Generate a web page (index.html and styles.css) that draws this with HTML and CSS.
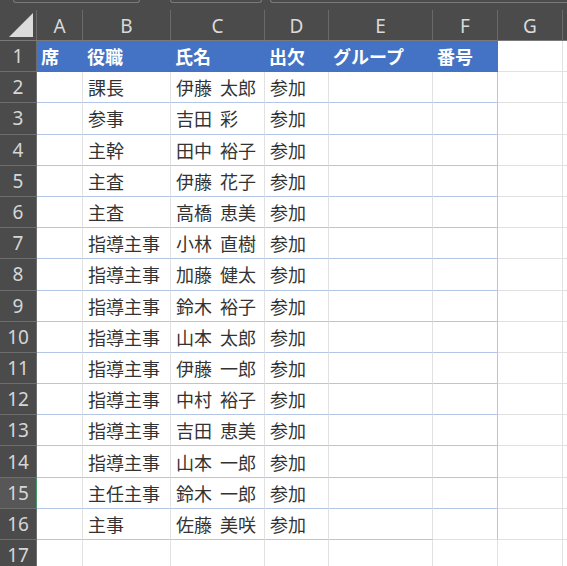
FILE: index.html
```html
<!DOCTYPE html>
<html lang="ja">
<head>
<meta charset="utf-8">
<link rel="stylesheet" href="styles.css">
</head>
<body>
<div class="strip">
  <div class="tab t1"></div>
  <div class="tab t2"></div>
  <div class="tab t3"></div>
</div>
<div class="sheet">
  <div class="hd corner"><div class="tri"></div></div>
  <div class="hd col">A</div><div class="hd col">B</div><div class="hd col">C</div><div class="hd col">D</div><div class="hd col">E</div><div class="hd col">F</div><div class="hd col">G</div><div class="hd col last"></div>

  <div class="rh">1</div>
  <div class="th">席</div><div class="th">役職</div><div class="th">氏名</div><div class="th">出欠</div><div class="th">グループ</div><div class="th">番号</div><div class="c"></div><div class="c"></div>

  <div class="rh">2</div><div class="d"></div><div class="d">課長</div><div class="d">伊藤 太郎</div><div class="d">参加</div><div class="d"></div><div class="d fr"></div><div class="c"></div><div class="c"></div>
  <div class="rh">3</div><div class="d"></div><div class="d">参事</div><div class="d">吉田 彩</div><div class="d">参加</div><div class="d"></div><div class="d fr"></div><div class="c"></div><div class="c"></div>
  <div class="rh">4</div><div class="d"></div><div class="d">主幹</div><div class="d">田中 裕子</div><div class="d">参加</div><div class="d"></div><div class="d fr"></div><div class="c"></div><div class="c"></div>
  <div class="rh">5</div><div class="d"></div><div class="d">主査</div><div class="d">伊藤 花子</div><div class="d">参加</div><div class="d"></div><div class="d fr"></div><div class="c"></div><div class="c"></div>
  <div class="rh">6</div><div class="d"></div><div class="d">主査</div><div class="d">高橋 恵美</div><div class="d">参加</div><div class="d"></div><div class="d fr"></div><div class="c"></div><div class="c"></div>
  <div class="rh">7</div><div class="d"></div><div class="d">指導主事</div><div class="d">小林 直樹</div><div class="d">参加</div><div class="d"></div><div class="d fr"></div><div class="c"></div><div class="c"></div>
  <div class="rh">8</div><div class="d"></div><div class="d">指導主事</div><div class="d">加藤 健太</div><div class="d">参加</div><div class="d"></div><div class="d fr"></div><div class="c"></div><div class="c"></div>
  <div class="rh">9</div><div class="d"></div><div class="d">指導主事</div><div class="d">鈴木 裕子</div><div class="d">参加</div><div class="d"></div><div class="d fr"></div><div class="c"></div><div class="c"></div>
  <div class="rh">10</div><div class="d"></div><div class="d">指導主事</div><div class="d">山本 太郎</div><div class="d">参加</div><div class="d"></div><div class="d fr"></div><div class="c"></div><div class="c"></div>
  <div class="rh">11</div><div class="d"></div><div class="d">指導主事</div><div class="d">伊藤 一郎</div><div class="d">参加</div><div class="d"></div><div class="d fr"></div><div class="c"></div><div class="c"></div>
  <div class="rh">12</div><div class="d"></div><div class="d">指導主事</div><div class="d">中村 裕子</div><div class="d">参加</div><div class="d"></div><div class="d fr"></div><div class="c"></div><div class="c"></div>
  <div class="rh">13</div><div class="d"></div><div class="d">指導主事</div><div class="d">吉田 恵美</div><div class="d">参加</div><div class="d"></div><div class="d fr"></div><div class="c"></div><div class="c"></div>
  <div class="rh">14</div><div class="d"></div><div class="d">指導主事</div><div class="d">山本 一郎</div><div class="d">参加</div><div class="d"></div><div class="d fr"></div><div class="c"></div><div class="c"></div>
  <div class="rh sel">15</div><div class="d"></div><div class="d">主任主事</div><div class="d">鈴木 一郎</div><div class="d">参加</div><div class="d"></div><div class="d fr"></div><div class="c"></div><div class="c"></div>
  <div class="rh">16</div><div class="d"></div><div class="d">主事</div><div class="d">佐藤 美咲</div><div class="d">参加</div><div class="d"></div><div class="d fr nb"></div><div class="c"></div><div class="c"></div>
  <div class="rh">17</div><div class="c"></div><div class="c"></div><div class="c"></div><div class="c"></div><div class="c"></div><div class="c"></div><div class="c"></div><div class="c"></div>
</div>
</body>
</html>
```
FILE: styles.css
```css
html, body {
  margin: 0;
  padding: 0;
  background: #ffffff;
  overflow: hidden;
}
.strip {
  height: 10px;
  background: #4b4b4b;
  display: flex;
  align-items: flex-start;
}
.tab {
  box-sizing: border-box;
  height: 3px;
  border: 1px solid #7a7a7a;
  border-top: none;
  border-radius: 0 0 4px 4px;
}
.t1 { margin-left: 13px; width: 127px; }
.t2 { margin-left: 30px; width: 92px; }
.t3 { margin-left: 8px; flex: 1; border-right: none; border-radius: 0 0 0 4px; }
.sheet {
  display: grid;
  grid-template-columns: 37px 46px 88px 94px 64px 104px 65px 65px 1fr;
  grid-template-rows: 31px;
  grid-auto-rows: 31.2px;
  font-family: "Noto Sans CJK JP", sans-serif;
}
.hd {
  box-sizing: border-box;
  background: #4b4b4b;
  border-bottom: 1px solid #7a7a7a;
  border-right: 1px solid #6a6a6a;
  color: #dadada;
  font-family: "Noto Sans", sans-serif;
  font-size: 19px;
  display: flex;
  align-items: center;
  justify-content: center;
  padding-top: 2px;
}
.col { border-top: 0; }
.last { border-right: none; }
.corner {
  position: relative;
  padding: 0;
}
.tri {
  position: absolute;
  right: 3px;
  bottom: 3px;
  width: 24px;
  height: 24px;
  background: #dcdcdc;
  clip-path: polygon(100% 0, 100% 100%, 0 100%);
}
.rh {
  box-sizing: border-box;
  background: #4b4b4b;
  border-bottom: 1px solid #6e6e6e;
  border-right: 1px solid #6e6e6e;
  color: #d6d6d6;
  font-family: "Noto Sans", sans-serif;
  font-size: 19px;
  display: flex;
  align-items: center;
  justify-content: center;
}
.rh.sel {
  background: #575757;
  border-right: 1px solid #3f9a63;
}
.th {
  background: #4472c4;
  color: #ffffff;
  font-weight: bold;
  font-size: 18px;
  display: flex;
  align-items: center;
  padding-left: 4px;
  white-space: nowrap;
  border-bottom: 1px solid #4472c4;
}
.d, .c {
  box-sizing: border-box;
  border-right: 1px solid #e1e1e1;
  border-bottom: 1px solid #e1e1e1;
  color: #333333;
  font-size: 18px;
  display: flex;
  align-items: center;
  padding-left: 5px;
  white-space: nowrap;
  word-spacing: 4px;
}
.d { border-bottom-color: #b4c6e7; }
.d.fr { border-right-color: #b4c6e7; }
.d.nb { border-bottom-color: #e1e1e1; }
```
